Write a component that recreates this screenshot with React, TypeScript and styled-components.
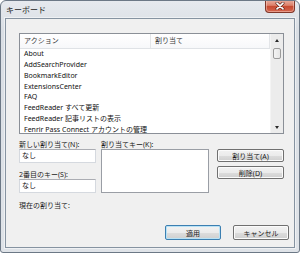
import styled, { createGlobalStyle } from "styled-components"

const GlobalStyle = createGlobalStyle`
  body {
    margin: 0;
    background: #ffffff;
    font-family: "Noto Sans", "Noto Sans CJK JP", sans-serif;
    color: #111;
  }
`

const actions = [
  "About",
  "AddSearchProvider",
  "BookmarkEditor",
  "ExtensionsCenter",
  "FAQ",
  "FeedReader すべて更新",
  "FeedReader 記事リストの表示",
  "Fenrir Pass Connect アカウントの管理",
]

const Window = styled.div`
  width: 300px;
  height: 253px;
  box-sizing: border-box;
  border: 1px solid #6c7886;
  border-radius: 6px 6px 3px 3px;
  background: linear-gradient(#e6e9ee, #d9dee4 30px, #dfe3e8);
  display: flex;
  flex-direction: column;
  overflow: hidden;
`

const TitleBar = styled.div`
  height: 17px;
  display: flex;
  align-items: flex-start;
  justify-content: space-between;
`

const Title = styled.span`
  padding-left: 5px;
  line-height: 17px;
  font-size: 8px;
  color: #1b1b1b;
`

const CloseButton = styled.div`
  width: 30px;
  height: 13px;
  margin-top: -1px;
  margin-right: 4px;
  box-sizing: border-box;
  border: 1px solid #80372a;
  border-top: none;
  border-radius: 0 0 4px 4px;
  background: linear-gradient(#eab0a2, #dc806a 45%, #c74a31 52%, #d5664f);
  box-shadow: inset 0 0 0 1px rgba(255, 220, 210, 0.45);
  display: flex;
  align-items: center;
  justify-content: center;
`

const Client = styled.div`
  flex: 1;
  margin: 0 4px 4px;
  border: 1px solid #8693a1;
  box-shadow: 0 0 0 1px rgba(255, 255, 255, 0.5);
  background: #f0f0f0;
  padding: 14px 5px 7px 13px;
  display: flex;
  flex-direction: column;
  font-size: 7px;
`

const ListBox = styled.div`
  height: 101px;
  margin-right: 5px;
  box-sizing: border-box;
  border: 1px solid #8a8f97;
  background: #fff;
  display: flex;
  overflow: hidden;
`

const ListMain = styled.div`
  flex: 1;
  display: flex;
  flex-direction: column;
  overflow: hidden;
`

const Header = styled.div`
  height: 15px;
  flex-shrink: 0;
  box-sizing: border-box;
  display: flex;
  border-bottom: 1px solid #dfe2e6;
  background: linear-gradient(#ffffff, #f7f8fa);
`

const HeaderCell = styled.div<{ $w?: number }>`
  ${(p) => (p.$w ? `width: ${p.$w}px;` : "flex: 1;")}
  box-sizing: border-box;
  padding-left: 4px;
  line-height: 14px;
  color: #3a3a3a;
  border-right: 1px solid #e3e5e8;
`

const Row = styled.div`
  height: 10.86px;
  flex-shrink: 0;
  line-height: 10.86px;
  padding-left: 4px;
  white-space: nowrap;
  color: #111;
`

const ScrollBar = styled.div`
  width: 12px;
  flex-shrink: 0;
  display: flex;
  flex-direction: column;
  background: #ececec;
  border-left: 1px solid #f4f4f4;
`

const ArrowButton = styled.div<{ $down?: boolean }>`
  height: 12px;
  display: flex;
  align-items: center;
  justify-content: center;

  &::after {
    content: "";
    border-left: 2.5px solid transparent;
    border-right: 2.5px solid transparent;
    ${(p) =>
      p.$down ? "border-top: 3px solid #2a2a2a;" : "border-bottom: 3px solid #2a2a2a;"}
  }
`

const Track = styled.div`
  flex: 1;
  padding: 2px 2px 0;
`

const Thumb = styled.div`
  height: 11px;
  box-sizing: border-box;
  border: 1px solid #9b9b9b;
  border-radius: 2px;
  background: linear-gradient(90deg, #f4f4f4, #e6e6e6);
`

const Lower = styled.div`
  margin-top: 6px;
  margin-right: 5px;
  display: grid;
  grid-template-columns: 77px 108px 1fr;
  column-gap: 5px;
  align-items: start;
`

const Column = styled.div`
  display: flex;
  flex-direction: column;
`

const Label = styled.div<{ $gap?: number }>`
  height: 9px;
  line-height: 9px;
  margin-top: ${(p) => p.$gap ?? 0}px;
  color: #1a1a1a;
  white-space: nowrap;
`

const TextBox = styled.div`
  height: 14px;
  box-sizing: border-box;
  border: 1px solid #d5d9df;
  border-top-color: #abadb3;
  background: #fff;
  padding-left: 2px;
  line-height: 12px;
`

const KeyArea = styled.div`
  height: 44px;
  box-sizing: border-box;
  border: 1px solid #9a9ea5;
  background: #fff;
`

const SideButtons = styled.div`
  padding: 9px 0 0 3px;
  display: flex;
  flex-direction: column;
  gap: 4px;
`

const Button = styled.div<{ $default?: boolean; $w?: number; $h?: number }>`
  width: ${(p) => (p.$w ? `${p.$w}px` : "auto")};
  height: ${(p) => p.$h ?? 13}px;
  box-sizing: border-box;
  border: 1px solid ${(p) => (p.$default ? "#3c7fb1" : "#707070")};
  border-radius: 2px;
  background: linear-gradient(#f2f2f2, #ebebeb 50%, #dddddd 51%, #cfcfcf);
  box-shadow: inset 0 0 0 1px ${(p) => (p.$default ? "#b8e2f6" : "#fbfbfb")};
  display: flex;
  align-items: center;
  justify-content: center;
  color: #1a1a1a;
`

const Footer = styled.div`
  margin-top: auto;
  display: flex;
  justify-content: flex-end;
  gap: 12px;
`

function CloseGlyph() {
  return (
    <svg width="10" height="8" viewBox="0 0 10 8">
      <path d="M2 1.2 L8 6.8 M8 1.2 L2 6.8" stroke="#5a2218" strokeWidth="3" strokeLinecap="round" />
      <path d="M2 1.2 L8 6.8 M8 1.2 L2 6.8" stroke="#ffffff" strokeWidth="1.7" strokeLinecap="round" />
    </svg>
  )
}

export default function App() {
  return (
    <>
      <GlobalStyle />
      <Window>
        <TitleBar>
          <Title>キーボード</Title>
          <CloseButton>
            <CloseGlyph />
          </CloseButton>
        </TitleBar>
        <Client>
          <ListBox>
            <ListMain>
              <Header>
                <HeaderCell $w={131}>アクション</HeaderCell>
                <HeaderCell>割り当て</HeaderCell>
              </Header>
              {actions.map((a) => (
                <Row key={a}>{a}</Row>
              ))}
            </ListMain>
            <ScrollBar>
              <ArrowButton />
              <Track>
                <Thumb />
              </Track>
              <ArrowButton $down />
            </ScrollBar>
          </ListBox>

          <Lower>
            <Column>
              <Label>新しい割り当て(N):</Label>
              <TextBox>なし</TextBox>
              <Label $gap={7}>2番目のキー(S):</Label>
              <TextBox>なし</TextBox>
              <Label $gap={8}>現在の割り当て:</Label>
            </Column>
            <Column>
              <Label>割り当てキー(K):</Label>
              <KeyArea />
            </Column>
            <SideButtons>
              <Button>割り当て(A)</Button>
              <Button>削除(D)</Button>
            </SideButtons>
          </Lower>

          <Footer>
            <Button $default $w={56} $h={15}>適用</Button>
            <Button $w={56} $h={15}>キャンセル</Button>
          </Footer>
        </Client>
      </Window>
    </>
  )
}
